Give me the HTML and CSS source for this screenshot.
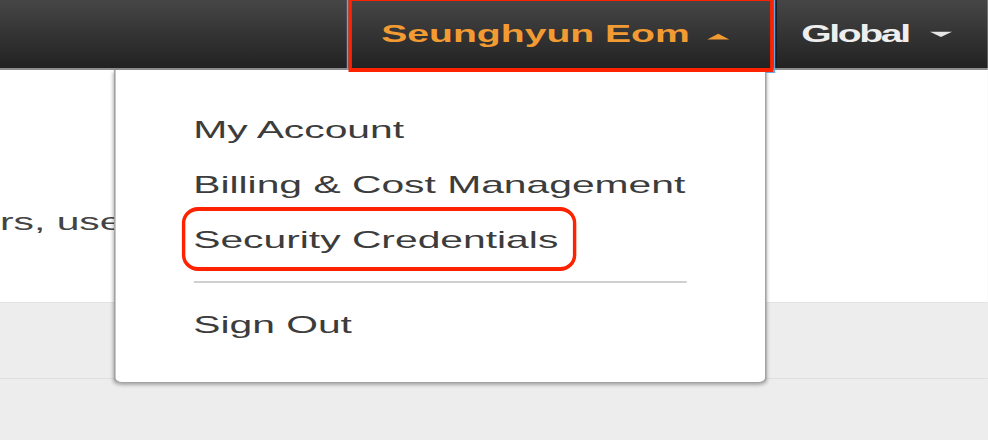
FILE: index.html
```html
<!DOCTYPE html>
<html lang="en">
<head>
<meta charset="utf-8">
<title>Account menu</title>
<link rel="stylesheet" href="styles.css">
</head>
<body>
<div class="page">
  <header class="topbar">
    <nav class="nav">
      <div class="nav-item user">
        <span class="label">Seunghyun Eom</span>
        <svg class="caret" width="13" height="68" viewBox="0 0 13 68"><polygon points="0,39.5 6.5,33.8 13,39.5" fill="#f39b33"/></svg>
        <div class="dropdown">
          <ul class="menu">
            <li>My Account</li>
            <li>Billing &amp; Cost Management</li>
            <li><span class="highlight">Security Credentials</span></li>
          </ul>
          <hr class="divider">
          <ul class="menu">
            <li>Sign Out</li>
          </ul>
        </div>
      </div>
      <div class="nav-item region">
        <span class="label">Global</span>
        <svg class="caret" width="13" height="68" viewBox="0 0 13 68"><polygon points="0,31.8 13,31.8 6.5,37" fill="#e6e6e6"/></svg>
      </div>
    </nav>
  </header>
  <main class="content">
    <section class="intro"><p class="intro-text">rs, use</p></section>
    <section class="band"></section>
    <section class="rest"></section>
  </main>
</div>
</body>
</html>
```

FILE: styles.css
```css
html, body {
  margin: 0;
  padding: 0;
  background: #ededed;
  overflow: hidden;
}

body {
  width: 988px;
  height: 440px;
  font-family: "Liberation Sans", Arial, sans-serif;
}

.page {
  width: 581.2px;
  height: 440px;
  transform: scaleX(1.7);
  transform-origin: 0 0;
}

.topbar {
  height: 68px;
  background: linear-gradient(#464646, #222222);
  border-bottom: 2px solid #8e8e8e;
}

.nav {
  display: flex;
  justify-content: flex-end;
  height: 68px;
}

.nav-item {
  position: relative;
  display: flex;
  align-items: flex-start;
  height: 68px;
  font-size: 23px;
  font-weight: bold;
  line-height: 68px;
  white-space: nowrap;
}

.nav-item .caret {
  display: block;
  flex: none;
}

.user {
  padding: 0 27px 0 20px;
  gap: 10.6px;
  color: #f39b33;
}

.user::before {
  content: "";
  position: absolute;
  left: 0;
  right: 0;
  top: 0;
  bottom: -5px;
  border-style: solid;
  border-color: #6aa6e0;
  border-width: 0 1.5px 1.5px 1.5px;
  z-index: 1;
}

.user::after {
  content: "";
  position: absolute;
  left: 1.2px;
  right: 1.5px;
  top: -3px;
  bottom: -4px;
  border-style: solid;
  border-color: #ff2200;
  border-width: 4px 2.4px;
  z-index: 3;
}

.region {
  padding: 0 21.5px 0 14px;
  gap: 12.2px;
  color: #eeeeee;
  letter-spacing: -1.4px;
  border-left: 1px solid #1a1a1a;
}

.dropdown {
  position: absolute;
  top: 70px;
  right: 5px;
  width: 384.7px;
  box-sizing: border-box;
  padding: 32px 46px 30px;
  background: #ffffff;
  border: 1px solid #a2a2a2;
  border-top: none;
  border-radius: 0 0 5px 5px;
  box-shadow: 0 2px 3px rgba(0, 0, 0, 0.3);
  z-index: 2;
  font-size: 24px;
  font-weight: normal;
  line-height: 55px;
  color: #3c3c3c;
  letter-spacing: 0;
}

.menu {
  list-style: none;
  margin: 0;
  padding: 0;
}

.menu li {
  height: 55px;
  white-space: nowrap;
}

.highlight {
  position: relative;
  display: inline-block;
}

.highlight::after {
  content: "";
  position: absolute;
  left: -7px;
  right: -11px;
  top: -5px;
  bottom: -4px;
  border-style: solid;
  border-color: #ff2200;
  border-width: 4px 2.4px;
  border-radius: 9.5px / 16px;
}

.divider {
  height: 2px;
  margin: 14px 0;
  border: none;
  background: #d0d0d0;
}

.content {
  display: flex;
  flex-direction: column;
}

.intro {
  height: 232px;
  background: #ffffff;
}

.intro-text {
  margin: 0;
  padding-top: 137px;
  font-size: 24px;
  line-height: 30px;
  color: #444444;
  white-space: nowrap;
}

.band {
  height: 75px;
  background: #ededed;
  border-top: 1px solid #e4e4e4;
}

.rest {
  height: 62px;
  background: #ededed;
  border-top: 1px solid #dfdfdf;
}
```
